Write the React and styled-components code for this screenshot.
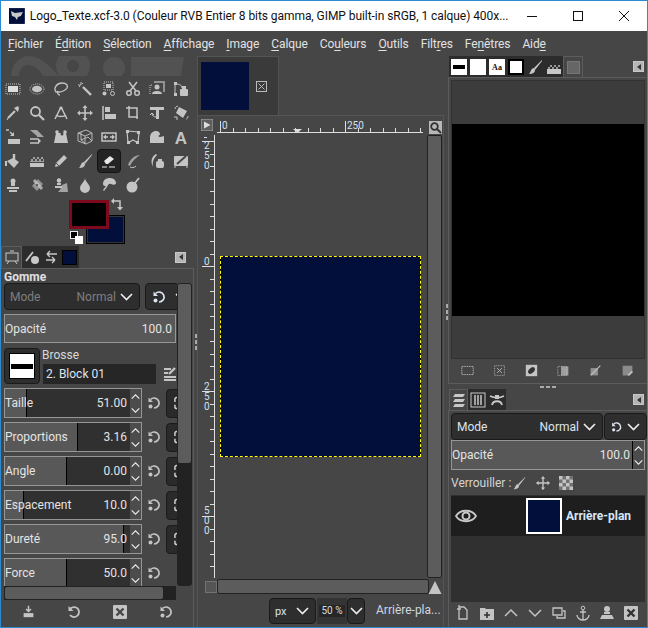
import React from "react";
import styled, { createGlobalStyle } from "styled-components";

const GlobalStyle = createGlobalStyle`
  html, body { margin: 0; padding: 0; background: #464646; }
  * { box-sizing: border-box; }
`;

const NAVY = "#010f3a";

const Window = styled.div`
  width: 648px;
  height: 628px;
  display: flex;
  flex-direction: column;
  overflow: hidden;
  background: #464646;
  border: 1px solid #2b8ad0;
  font-family: Roboto, "Open Sans", sans-serif;
  font-size: 12px;
  color: #dcdcdc;
`;

const TitleBar = styled.div`
  height: 30px;
  flex: none;
  display: flex;
  align-items: center;
  background: #fff;
  color: #111;
  padding-left: 8px;
  font-size: 12px;
`;

const TitleText = styled.div`
  margin-left: 5px;
  width: 484px;
  white-space: nowrap;
  overflow: hidden;
  letter-spacing: -0.06px;
`;

const WinControls = styled.div`
  margin-left: auto;
  display: flex;
`;

const WinButton = styled.div`
  width: 46px;
  height: 30px;
  display: flex;
  align-items: center;
  justify-content: center;
`;

const MenuBar = styled.div`
  height: 25px;
  flex: none;
  display: flex;
  align-items: center;
  gap: 12px;
  padding: 0 0 0 7px;
  background: #464646;
  font-size: 12px;
  letter-spacing: -0.1px;
  color: #e2e2e2;
`;

const MenuItem = styled.span`
  white-space: nowrap;
  u { text-underline-offset: 2px; }
`;

const Main = styled.div`
  flex: 1;
  min-height: 0;
  display: grid;
  grid-template-columns: 193px 3px 248px 3px 1fr;
`;

const Column = styled.div`
  display: flex;
  flex-direction: column;
  min-width: 0;
  min-height: 0;
`;

const Sash = styled.div`
  display: flex;
  flex-direction: column;
  align-items: center;
  justify-content: center;
  gap: 2px;
  padding-bottom: ${p => p.$low || 0}px;
  i { display: block; width: 2px; height: 4px; background: #aaa; }
`;

const Logo = styled.svg`
  display: block;
  margin: 0 0 1px 0;
  flex: none;
`;

const ToolGrid = styled.div`
  display: grid;
  grid-template-columns: repeat(8, 24px);
  grid-auto-rows: 24px;
  flex: none;
`;

const ToolCell = styled.div`
  display: flex;
  align-items: center;
  justify-content: center;
  border-radius: 4px;
  color: #c4c4c4;
  ${p => p.$active && `background: #242424; border: 1px solid #141414; color: #e8e8e8;`}
`;

const ColorArea = styled.div`
  position: relative;
  height: 49px;
  flex: none;
`;

const Swatch = styled.div`
  position: absolute;
`;

const FgSwatch = styled(Swatch)`
  left: 68px;
  top: 3px;
  width: 40px;
  height: 29px;
  background: #000;
  border: 3px solid #7d0a1c;
  z-index: 2;
`;

const BgSwatch = styled(Swatch)`
  left: 85px;
  top: 18px;
  width: 39px;
  height: 29px;
  background: ${NAVY};
  border: 1px solid #000;
  box-shadow: inset 0 0 0 1px #333;
`;

const DefaultBlack = styled(Swatch)`
  left: 69px;
  top: 34px;
  width: 8px;
  height: 8px;
  background: #000;
  border: 1px solid #eee;
`;

const DefaultWhite = styled(Swatch)`
  left: 74px;
  top: 39px;
  width: 8px;
  height: 8px;
  background: #fff;
`;

const SwapIcon = styled(Swatch)`
  left: 110px;
  top: 1px;
  color: #c8c8c8;
`;

const TabRow = styled.div`
  height: ${p => p.$h || 22}px;
  flex: none;
  display: flex;
  align-items: stretch;
  padding-left: ${p => p.$pad || 0}px;
`;

const Tab = styled.div`
  width: ${p => p.$w || 19}px;
  display: flex;
  align-items: center;
  justify-content: center;
  color: #c8c8c8;
  background: ${p => (p.$active ? "#464646" : "#2c2c2c")};
  ${p => p.$active && `border: 1px solid #5c5c5c; border-bottom: none;`}
`;

const DockMenu = styled.div`
  margin-left: auto;
  margin-right: ${p => p.$right || 8}px;
  align-self: center;
  width: 11px;
  height: 11px;
  background: #b5b5b5;
  border: 1px solid #c8c8c8;
  display: flex;
  align-items: center;
  justify-content: center;
  &::after {
    content: "";
    border: 3px solid transparent;
    border-right: 4px solid #333;
    border-left: none;
  }
`;

const OptionsFrame = styled.div`
  flex: 1;
  min-height: 0;
  border-top: 1px solid #5c5c5c;
  border-right: 1px solid #5c5c5c;
  padding: 1px 0 0 3px;
  display: flex;
  flex-direction: column;
`;

const OptionsTitle = styled.div`
  font-weight: 700;
  font-size: 12px;
  height: 13px;
  line-height: 14px;
  color: #e0e0e0;
`;

const OptionsBody = styled.div`
  display: flex;
  align-items: flex-start;
  height: 303px;
  flex: none;
`;

const OptionsScroll = styled.div`
  width: 173px;
  height: 303px;
  overflow: hidden;
  display: flex;
  flex-direction: column;
  gap: 4px;
  flex: none;
`;

const VScrollTrack = styled.div`
  width: 15px;
  height: ${p => p.$h}px;
  flex: none;
  background: #222;
  border: 1px solid #222;
  border-radius: 3px;
`;

const VScrollThumb = styled.div`
  height: ${p => p.$h}px;
  background: #5c5c5c;
  border-radius: 2px;
`;

const HScrollTrack = styled.div`
  width: ${p => p.$w}px;
  height: 14px;
  flex: none;
  background: #222;
  border: 1px solid #222;
`;

const HScrollThumb = styled.div`
  width: ${p => p.$w}px;
  height: 12px;
  background: #5c5c5c;
  border-radius: 2px;
`;

const ComboRow = styled.div`
  display: flex;
  gap: ${p => p.$gap ?? 5}px;
  height: 27px;
  flex: none;
`;

const Combo = styled.div`
  flex: ${p => (p.$w ? "none" : 1)};
  width: ${p => (p.$w ? p.$w + "px" : "auto")};
  display: flex;
  align-items: center;
  justify-content: space-between;
  gap: 4px;
  padding: 0 6px 0 5px;
  background: #2e2e2e;
  border: 1px solid #1a1a1a;
  border-radius: 4px;
  color: ${p => (p.$dim ? "#7e7e7e" : "#dce4f0")};
  white-space: nowrap;
  overflow: hidden;
`;

const ComboValue = styled.span`
  margin-left: auto;
`;

const Scale = styled.div`
  width: ${p => p.$w}px;
  height: ${p => p.$h || 30}px;
  flex: none;
  display: flex;
  align-items: center;
  padding-left: 0;
  border: 1px solid #969696;
  background: linear-gradient(
    to right,
    #585858 0 ${p => p.$fill}px,
    #000 ${p => p.$fill}px ${p => p.$fill + 1}px,
    #303030 ${p => p.$fill + 1}px
  );
  color: #e4e4e4;
  white-space: nowrap;
`;

const ScaleValue = styled.span`
  margin-left: auto;
  padding-right: 3px;
`;

const Arrows = styled.div`
  width: 11px;
  height: 100%;
  flex: none;
  display: flex;
  flex-direction: column;
  align-items: center;
  justify-content: space-around;
  background: #4c4c4c;
  color: #eee;
`;

const BrushRow = styled.div`
  display: flex;
  height: 36px;
  flex: none;
  gap: 1px;
  margin-top: 1px;
`;

const BrushPreview = styled.div`
  width: 36px;
  height: 36px;
  flex: none;
  border: 1px solid #1a1a1a;
  border-radius: 4px;
  background: #2e2e2e;
  display: flex;
  align-items: center;
  justify-content: center;
`;

const BrushThumb = styled.div`
  width: 26px;
  height: 26px;
  background: #fff;
  border: 1px solid #000;
  display: flex;
  align-items: center;
  justify-content: center;
  &::before {
    content: "";
    width: 22px;
    height: 5px;
    background: #000;
  }
`;

const BrushInfo = styled.div`
  flex: 1;
  display: flex;
  flex-direction: column;
  justify-content: space-between;
  padding-left: 1px;
`;

const BrushLabel = styled.div`
  line-height: 14px;
  color: #d8d8d8;
`;

const BrushLine = styled.div`
  display: flex;
  align-items: center;
`;

const BrushEntry = styled.div`
  width: 113px;
  height: 20px;
  flex: none;
  margin-left: 1px;
  background: #262626;
  padding: 0 3px;
  line-height: 20px;
  color: #dce4f0;
`;

const SpinRow = styled.div`
  display: flex;
  align-items: center;
  height: 30px;
  flex: none;
`;

const RowIcon = styled.div`
  width: ${p => p.$w || 24}px;
  display: flex;
  justify-content: center;
  color: #c4c4c4;
  flex: none;
`;

const Toggle = styled.div`
  width: 22px;
  height: 29px;
  flex: none;
  background: #2a2a2a;
  border: 1px solid #1a1a1a;
  border-radius: 4px;
  color: #cfcfcf;
  display: flex;
  align-items: center;
  padding-left: 7px;
  margin-left: 1px;
`;

const IconBar = styled.div`
  height: ${p => p.$h}px;
  flex: none;
  display: flex;
  align-items: center;
  padding-left: ${p => p.$pad || 0}px;
  color: #c4c4c4;
`;

const BarCell = styled.div`
  width: ${p => p.$w}px;
  flex: none;
  display: flex;
  justify-content: center;
`;

const ThumbTab = styled.div`
  width: 82px;
  height: 59px;
  flex: none;
  display: flex;
  align-items: center;
  padding-left: 3px;
  background: #3a3a3a;
  border: 1px solid #545454;
  border-bottom: none;
  color: #c0c0c0;
`;

const ThumbImage = styled.div`
  width: 48px;
  height: 48px;
  flex: none;
  background: ${NAVY};
`;

const CloseBox = styled.div`
  margin-left: 7px;
  display: flex;
`;

const ImageFrame = styled.div`
  flex: 1;
  min-height: 0;
  margin-right: 1px;
  border: 1px solid #545454;
  border-bottom: none;
  padding: 3px 3px 0 3px;
  display: grid;
  grid-template-columns: 16px 209px 16px;
  grid-template-rows: 16px 443px 17px 1fr;
`;

const RulerCorner = styled.div`
  color: #c0c0c0;
  display: flex;
`;

const Ruler = styled.svg`
  display: block;
  font-family: Roboto, sans-serif;
  font-size: 10px;
`;

const Canvas = styled.div`
  display: flex;
  align-items: center;
  justify-content: center;
  padding-right: 3px;
  background: #464646;
`;

const Layer = styled.div`
  width: 201px;
  height: 201px;
  flex: none;
  background: #000;
  border: 1px dashed #ffff00;
`;

const LayerFill = styled.div`
  width: 100%;
  height: 100%;
  background: ${NAVY};
`;

const CanvasVScroll = styled.div`
  width: 15px;
  height: 443px;
  background: #5c5c5c;
  border: 1px solid #222;
  border-radius: 2px;
  margin-left: 1px;
`;

const CanvasHScroll = styled.div`
  height: 15px;
  background: #5c5c5c;
  border: 1px solid #222;
  border-radius: 2px;
  margin: 1px 0 0 0;
  width: 212px;
`;

const NavBox = styled.div`
  color: #c4c4c4;
  display: flex;
  align-items: center;
  justify-content: flex-end;
`;

const StatusBar = styled.div`
  grid-column: 1 / 4;
  display: flex;
  align-items: flex-start;
  padding: 3px 0 0 68px;
`;

const UnitCombo = styled(Combo)`
  width: 47px;
  height: 26px;
  flex: none;
  font-size: 11px;
`;

const ZoomBox = styled.div`
  width: 30px;
  height: 26px;
  margin-left: 1px;
  background: #343434;
  display: flex;
  align-items: center;
  justify-content: center;
  flex: none;
`;

const ZoomEntry = styled.div`
  width: 26px;
  height: 12px;
  background: #262626;
  font-size: 10px;
  line-height: 12px;
  text-align: center;
  white-space: nowrap;
`;

const ArrowButton = styled(Combo)`
  width: 18px;
  height: 26px;
  flex: none;
  padding: 0;
  justify-content: center;
`;

const StatusText = styled.div`
  margin-left: 11px;
  white-space: nowrap;
  line-height: 25px;
  color: #cfd6e0;
`;

const DockFrame = styled.div`
  height: 307px;
  flex: none;
  border-top: 1px solid #5c5c5c;
  border-bottom: 1px solid #5c5c5c;
  border-left: 1px solid #5c5c5c;
  padding: 2px 0 0 2px;
  display: flex;
  flex-direction: column;
`;

const PreviewBox = styled.div`
  width: 194px;
  height: 279px;
  flex: none;
  display: flex;
  align-items: center;
  background: #3c3c3c;
  border: 1px solid #323232;
`;

const PreviewBlack = styled.div`
  width: 100%;
  height: 192px;
  background: #000;
`;

const SashRow = styled.div`
  height: 5px;
  flex: none;
  display: flex;
  align-items: center;
  justify-content: center;
  gap: 2px;
  i { display: block; width: 4px; height: 2px; background: #aaa; }
`;

const LayersFrame = styled.div`
  flex: 1;
  min-height: 0;
  border-top: 1px solid #5c5c5c;
  border-left: 1px solid #5c5c5c;
  padding: 2px 0 0 2px;
  display: flex;
  flex-direction: column;
`;

const LockRow = styled.div`
  height: 25px;
  flex: none;
  display: flex;
  align-items: center;
  color: #c4c4c4;
  white-space: nowrap;
`;

const LockLabel = styled.span`
  width: 56px;
  color: #d4d4d4;
`;

const LayerList = styled.div`
  width: 194px;
  height: 107px;
  flex: none;
  background: #303030;
  padding-top: 1px;
`;

const LayerRow = styled.div`
  height: 40px;
  display: flex;
  align-items: center;
  background: #1e1e1e;
`;

const LayerEye = styled.div`
  width: 75px;
  flex: none;
  padding-left: 4px;
  color: #c8c8c8;
  display: flex;
`;

const LayerThumb = styled.div`
  width: 36px;
  height: 36px;
  flex: none;
  background: ${NAVY};
  border: 2px solid #fff;
`;

const LayerName = styled.div`
  margin-left: 4px;
  font-weight: 700;
  color: #d6e6fa;
  white-space: nowrap;
`;

const S = { fill: "none", stroke: "currentColor" };

// hand drawn 16px icons, roughly the GIMP symbolic set
const Ico = ({ size = 16, children }) => (
  <svg width={size} height={size} viewBox="0 0 16 16" fill="currentColor">{children}</svg>
);

const Chevron = ({ w = 13, h = 8, sw = 1.6, up, color = "#eee" }) => (
  <svg width={w} height={h} viewBox="0 0 13 8" style={{ flex: "none" }}>
    <path d={up ? "M1 7 6.5 1.5 12 7" : "M1 1 6.5 6.5 12 1"} fill="none" stroke={color} strokeWidth={sw} />
  </svg>
);

const ResetIcon = () => (
  <Ico>
    <path d="M4.5 4.5A5 5 0 1 1 8 13" {...S} strokeWidth="1.7" />
    <path d="M2.5 2.5v4.5h4.5z" />
    <circle cx="4.5" cy="11.5" r="2" />
  </Ico>
);

const BrushGlyph = () => (
  <>
    <path d="M15 1 7 9l1 2 7-9z" />
    <path d="M7 9c-3 0-3 4-5 6 3 0 6-1 6-4z" />
  </>
);

const MoveGlyph = () => (
  <>
    <path d="M8 1v14M1 8h14" {...S} strokeWidth="1.6" />
    <path d="M8 0 5.5 3h5zM8 16l-2.5-3h5zM0 8l3-2.5v5zM16 8l-3-2.5v5z" />
  </>
);

const tools = [
  <Ico key="rect"><rect x="1" y="3" width="14" height="10" {...S} strokeDasharray="1 1" /><rect x="3" y="5" width="10" height="6" fill="#ddd" /></Ico>,
  <Ico key="ell"><ellipse cx="8" cy="8" rx="7" ry="5" {...S} strokeDasharray="1 1" /><ellipse cx="8" cy="8" rx="5" ry="3.2" /></Ico>,
  <Ico key="lasso"><path d="M3 11C0 7 4 2 9 2s6 3 5 5-5 4-8 4c-1 0-3 0-3 0zM5 10c-1 2 0 4 2 4" {...S} strokeWidth="1.3" /></Ico>,
  <Ico key="wand"><path d="M6 6 14 14" {...S} strokeWidth="2.4" /><path d="M4 1v3M1 4h3M6 2 5 3M2 6l1-1" {...S} /></Ico>,
  <Ico key="colsel"><rect x="3" y="1" width="9" height="8" {...S} strokeDasharray="1 1" /><rect x="5" y="3" width="5" height="4" /><circle cx="3.5" cy="12.5" r="2" /><circle cx="11.5" cy="12.5" r="2" {...S} /></Ico>,
  <Ico key="sciss"><path d="M5 10 12 1M11 10 4 1" {...S} strokeWidth="1.5" /><circle cx="4" cy="12" r="2.3" {...S} strokeWidth="1.5" /><circle cx="12" cy="12" r="2.3" {...S} strokeWidth="1.5" /></Ico>,
  <Ico key="fgsel"><path d="M1 13V4h2" {...S} strokeDasharray="1 1" /><path d="M5 1h10v10" {...S} opacity=".6" strokeWidth="2" /><circle cx="8" cy="6" r="2.5" /><path d="M3 13c0-2 2-3 5-3s5 1 5 3z" /></Ico>,
  <Ico key="path"><path d="M2 14V3h1M3 3c3 0 6 1 6 4" {...S} /><rect x="1" y="1" width="3" height="3" /><rect x="1" y="12" width="3" height="3" /><rect x="7" y="8" width="8" height="7" rx="1" /><rect x="9" y="5" width="4" height="3" /></Ico>,
  <Ico key="drop"><path d="M3 13 10 6" {...S} strokeWidth="2.2" /><path d="M2 15 3 13" {...S} /><path d="M9 3l4 4 1-4-1-2z" /></Ico>,
  <Ico key="zoom"><circle cx="6.5" cy="6.5" r="4.5" {...S} strokeWidth="1.8" /><path d="M10 10l5 5" {...S} strokeWidth="2.2" /></Ico>,
  <Ico key="measure"><path d="M8 2 2 14M8 2l6 12M3 10c2 2 8 2 10 0" {...S} strokeWidth="1.5" /><circle cx="8" cy="3" r="1.6" /></Ico>,
  <Ico key="move"><MoveGlyph /></Ico>,
  <Ico key="align"><path d="M2 1v14" {...S} strokeWidth="1.5" /><rect x="4" y="2" width="5" height="5" /><rect x="4" y="9" width="11" height="5" /></Ico>,
  <Ico key="crop"><path d="M1 3h11v11M4 1v11h9" {...S} strokeWidth="1.5" /></Ico>,
  <Ico key="unified"><path d="M1 2h14v3h-5v9H7V5H1z" /><path d="M3 8c0 3 2 4 4 4M3 8l-2 2M3 8l2 2" {...S} /></Ico>,
  <Ico key="handle"><path d="M6 2 14 6 10 13 3 8z" /><path d="M2 4c0-2 2-3 3-3M13 14c1 0 2-1 2-3" {...S} /><path d="M1 12h3v3" {...S} /></Ico>,
  <Ico key="scale"><path d="M1 1h3M5 3l3 3" {...S} strokeWidth="1.4" /><path d="M9 7V3L5 7z" /><rect x="3" y="10" width="12" height="5" /></Ico>,
  <Ico key="shear"><path d="M1 1h7l7 7H8v-1z" opacity=".75" /><path d="M1 10h8M1 14h9" {...S} strokeWidth="1.4" /><path d="M12 12l-3-3v6z" /></Ico>,
  <Ico key="persp"><path d="M3 4h10l2 10H1z" /><circle cx="4" cy="3" r="1.8" /><circle cx="12" cy="3" r="1.8" /><circle cx="9" cy="5" r="1.5" fill="#464646" /></Ico>,
  <Ico key="cube"><path d="M1 4 9 1l6 3v8l-6 3-8-3zM1 4l7 3 7-3M8 7v8M4 3v8l4 3M4 11l7-3 4 4" {...S} strokeWidth=".9" /></Ico>,
  <Ico key="flip"><rect x="1" y="4" width="14" height="8" fill="none" stroke="currentColor" strokeWidth="1.5" /><path d="M2 8l3-2.5v5zM14 8l-3-2.5v5zM8 3v10" /><path d="M5 8h2M9 8h2" {...S} strokeWidth="1.5" /></Ico>,
  <Ico key="cage"><path d="M2 2 14 3 13 14 8 11 3 14z" {...S} strokeWidth="1.2" /><rect x="1" y="1" width="3" height="3" /><rect x="12" y="2" width="3" height="3" /><rect x="11" y="12" width="3" height="3" /><rect x="2" y="12" width="3" height="3" /></Ico>,
  <Ico key="warp"><path d="M1 14V9c0-5 3-7 6-7s4 2 4 4c-2 0-2 2 0 2 2 0 3-1 4-1v7z" /></Ico>,
  <Ico key="text"><text x="8" y="14.5" textAnchor="middle" fontFamily="Liberation Sans, sans-serif" fontWeight="700" fontSize="17">A</text></Ico>,
  <Ico key="bucket"><path d="M2 8 8 5l6 4-5 6z" /><path d="M9 1v6" {...S} strokeWidth="2.4" /><path d="M1 8v5" {...S} strokeWidth="2" /></Ico>,
  <Ico key="grad"><rect x="1" y="10" width="14" height="4" /><path d="M1 9h14v-1H1zM2 6h2v2H2zM6 6h2v2H6zM10 6h2v2h-2zM14 6h1v2h-1zM4 4h2v2H4zM8 4h2v2H8zM12 4h2v2h-2z" opacity=".7" /></Ico>,
  <Ico key="pencil"><path d="M2 14l1-4 8-8 3 3-8 8z" /><path d="M3 10l3 3" stroke="#464646" /></Ico>,
  <Ico key="brush"><BrushGlyph /></Ico>,
  <Ico key="eraser"><path d="M3 8 9 3l4 3-6 5H5z" /><path d="M1 14h5M8 14h6" {...S} /></Ico>,
  <Ico key="air"><path d="M15 2C10 2 5 6 3 12l2 1c2-5 6-8 10-11z" opacity=".7" /><path d="M5 14c2 1 4 1 6-1" {...S} /></Ico>,
  <Ico key="ink"><path d="M7 1C3 3 1 8 4 14c-1-5 1-9 4-12z" /><rect x="7" y="8" width="8" height="7" rx="2" /><rect x="9" y="6" width="4" height="3" /></Ico>,
  <Ico key="mypaint"><rect x="1" y="3" width="14" height="10" rx="1" /><path d="M4 11 13 3" stroke="#464646" strokeWidth="2" /><path d="M2 13v2M14 13v2" {...S} /></Ico>,
  <Ico key="clone"><circle cx="8" cy="4" r="2.5" /><path d="M6 6h4v3H6z" /><path d="M2 10h12v2H2zM4 13h8v2H4z" /></Ico>,
  <Ico key="heal"><path d="M3 9 9 2l5 5-6 7z" opacity=".6" /><path d="M5 3 13 12" {...S} strokeWidth="3" opacity=".8" /><circle cx="8" cy="8" r="1" fill="#464646" /></Ico>,
  <Ico key="pclone"><circle cx="6" cy="3.5" r="2.2" /><path d="M4 6h4v2H4zM2 9h7v2H2z" /><path d="M9 8l5-2 1 9H5l2-2z" opacity=".75" /></Ico>,
  <Ico key="blur"><path d="M8 1C8 4 3 8 3 11a5 5 0 0 0 10 0C13 8 8 4 8 1z" /></Ico>,
  <Ico key="smudge"><path d="M2 7c0-4 3-6 7-6s6 3 6 5-3 2-5 1-3 1-4 3l-3 4-1-1 3-4C4 9 2 9 2 7z" /></Ico>,
  <Ico key="dodge"><circle cx="7" cy="10" r="5.5" /><path d="M10 6l4-5" {...S} strokeWidth="1.8" /></Ico>,
];

const menus = [
  ["", "F", "ichier"], ["É", "d", "ition"], ["", "S", "élection"], ["", "A", "ffichage"],
  ["", "I", "mage"], ["", "C", "alque"], ["Co", "u", "leurs"], ["", "O", "utils"],
  ["Filt", "r", "es"], ["Fe", "n", "êtres"], ["Aid", "e", ""],
];

const scales = [
  ["Taille", "51.00", 21],
  ["Proportions", "3.16", 72],
  ["Angle", "0.00", 61],
  ["Espacement", "10.0", 18],
  ["Dureté", "95.0", 118],
  ["Force", "50.0", 61],
];

const ScaleRow = ({ label, value, fill, last }) => (
  <SpinRow>
    <Scale $w={138} $fill={fill}>
      {label}
      <ScaleValue>{value}</ScaleValue>
      <Arrows>
        <Chevron w={9} h={7} up />
        <Chevron w={9} h={7} />
      </Arrows>
    </Scale>
    <RowIcon $w={23}><ResetIcon /></RowIcon>
    {!last && (
      <Toggle>
        <svg width="14" height="14" viewBox="0 0 14 14">
          <path d="M1 6V3a2 2 0 0 1 4 0v3M1 9v2a2 2 0 0 0 4 0V9" fill="none" stroke="currentColor" strokeWidth="1.6" />
        </svg>
      </Toggle>
    )}
  </SpinRow>
);

const hTicks = Array.from({ length: 17 }, (_, i) => 3 + i * 12.5);
const vTicks = Array.from({ length: 36 }, (_, i) => 6 + i * 12.5);

const TopRuler = () => (
  <Ruler width="209" height="16">
    <path d="M0 13.5H206" stroke="#ddd" />
    {hTicks.map(x => (
      <path key={x} d={`M${Math.round(x) + 0.5} ${x === 3 || x === 128 ? 2 : 9}V13`} stroke="#ddd" />
    ))}
    <path d="M76 10h9l-4.5 4z" fill="#ddd" />
    <text x="5" y="10" fill="#cfe0f5">0</text>
    <text x="130" y="10" fill="#cfe0f5">250</text>
  </Ruler>
);

const LeftRuler = () => (
  <Ruler width="16" height="443">
    <path d="M13.5 0V443" stroke="#ddd" />
    {vTicks.map(y => (
      <path key={y} d={`M${(y - 6) % 125 === 0 ? 1 : 9} ${Math.round(y) + 0.5}H13`} stroke="#ddd" />
    ))}
    <path d="M3 2.5h3" stroke="#cfe0f5" />
    {[
      ["2", 14], ["5", 24], ["0", 34],
      ["0", 130],
      ["2", 255], ["5", 265], ["0", 275],
      ["5", 379], ["0", 389], ["0", 399],
    ].map(([d, y], i) => (
      <text key={i} x="3" y={y} fill="#cfe0f5">{d}</text>
    ))}
  </Ruler>
);

const dialogIcons = [
  <Ico key="a" size={13}><rect x="1" y="3" width="14" height="10" {...S} strokeDasharray="2 1" /></Ico>,
  <Ico key="b" size={13}><rect x="2" y="2" width="12" height="12" {...S} strokeDasharray="1 1" /><path d="M5 5l6 6M11 5l-6 6" {...S} /></Ico>,
  <Ico key="c" size={13}><rect x="1" y="1" width="14" height="14" /><ellipse cx="8" cy="8" rx="5" ry="3" transform="rotate(-45 8 8)" fill="#333" /></Ico>,
  <Ico key="d" size={13}><rect x="1" y="3" width="11" height="11" {...S} strokeDasharray="1 1" /><path d="M5 3h9v11H5zM8 4v9M11 4v9" opacity=".7" /></Ico>,
  <Ico key="e" size={13}><path d="M2 5h9v9H2z" opacity=".6" /><path d="M2 14 14 2" {...S} strokeWidth="1.4" /></Ico>,
  <Ico key="f" size={13}><path d="M2 2h12v8l-4 4H2z" opacity=".55" /><path d="M9 14l5-5" {...S} strokeWidth="2" /></Ico>,
];

const layerIcons = [
  <Ico key="a"><path d="M4 2h5l3 3v9H4zM2 4h4M4 2V0" {...S} strokeWidth="1.3" /></Ico>,
  <Ico key="b"><path d="M1 3h5l1 1h8v11H1z" /><path d="M8 7v6M5 10h6" stroke="#333" strokeWidth="1.6" /></Ico>,
  <Ico key="c"><path d="M2 11 8 5l6 6" {...S} strokeWidth="1.5" /></Ico>,
  <Ico key="d"><path d="M2 5l6 6 6-6" {...S} strokeWidth="1.5" /></Ico>,
  <Ico key="e"><path d="M2 3h9v7H2z" {...S} strokeWidth="1.3" /><path d="M12 6h2v7H6v-2" {...S} strokeWidth="1.3" /></Ico>,
  <Ico key="f"><circle cx="8" cy="3" r="1.8" {...S} /><path d="M8 5v10M5 7h6M2 10c0 3 3 5 6 5s6-2 6-5" {...S} strokeWidth="1.3" /></Ico>,
  <Ico key="g"><circle cx="8" cy="4" r="3" /><path d="M5 7h6v2H5zM1 14l2-4h10l2 4z" /></Ico>,
  <Ico key="h"><rect x="1" y="1" width="14" height="14" rx="1" /><path d="M4.5 4.5l7 7M11.5 4.5l-7 7" stroke="#333" strokeWidth="2.4" /></Ico>,
];

export default function App() {
  return (
    <Window>
      <GlobalStyle />
      <TitleBar>
        <svg width="16" height="16" viewBox="0 0 16 16">
          <rect width="16" height="16" fill={NAVY} />
          <path d="M2 3 6 5l8-1-2 4-3 1-1 3-2-3-3-1z" fill="#c8c8c8" />
        </svg>
        <TitleText>Logo_Texte.xcf-3.0 (Couleur RVB Entier 8 bits gamma, GIMP built-in sRGB, 1 calque) 400x...</TitleText>
        <WinControls>
          <WinButton>
            <svg width="10" height="10"><path d="M0 5.5H10" stroke="#111" /></svg>
          </WinButton>
          <WinButton>
            <svg width="10" height="10"><rect x=".5" y=".5" width="9" height="9" fill="none" stroke="#111" /></svg>
          </WinButton>
          <WinButton>
            <svg width="10" height="10"><path d="M0 0 10 10M10 0 0 10" stroke="#111" /></svg>
          </WinButton>
        </WinControls>
      </TitleBar>
      <MenuBar>
        {menus.map(([a, u, b]) => (
          <MenuItem key={a + u + b}>{a}<u>{u}</u>{b}</MenuItem>
        ))}
      </MenuBar>
      <Main>
        <Column>
          <Logo width="192" height="20" viewBox="0 0 192 20">
            <path d="M10 20C11 6 20 0 28 0c12 0 20 10 30 20H42C38 13 33 9 27 9c-6 0-9 5-9 11z" fill="#525252" />
            <circle cx="72" cy="10" r="17" fill="#525252" />
            <circle cx="72" cy="10" r="6" fill="#464646" />
            <circle cx="113" cy="12" r="11" fill="#525252" />
            <path d="M130 1h53l-3 19h-50z" fill="#525252" />
          </Logo>
          <ToolGrid>
            {tools.map((t, i) => (
              <ToolCell key={i} $active={i === 28}>{t}</ToolCell>
            ))}
          </ToolGrid>
          <ColorArea>
            <FgSwatch />
            <BgSwatch />
            <DefaultBlack />
            <DefaultWhite />
            <SwapIcon>
              <svg width="13" height="13" viewBox="0 0 13 13">
                <path d="M1 3h8v6" fill="none" stroke="currentColor" strokeWidth="1.5" />
                <path d="M3 0v6L0 3zM6 9h6l-3 3.5z" fill="currentColor" />
              </svg>
            </SwapIcon>
          </ColorArea>
          <TabRow>
            <Tab $active $w={21}>
              <Ico><rect x="2" y="3" width="12" height="8" {...S} /><path d="M6 1h4M3 14l2-3M13 14l-2-3" {...S} /></Ico>
            </Tab>
            <Tab>
              <Ico><path d="M2 12 9 3" {...S} strokeWidth="1.8" /><circle cx="11" cy="11" r="4" /></Ico>
            </Tab>
            <Tab>
              <Ico><path d="M14 5H4M4 5l3-3M4 5l3 3M3 11h9M12 11l-3-3M12 11l-3 3" {...S} strokeWidth="1.4" /></Ico>
            </Tab>
            <Tab>
              <svg width="15" height="15"><rect x=".5" y=".5" width="14" height="14" fill={NAVY} stroke="#000" /></svg>
            </Tab>
            <DockMenu />
          </TabRow>
          <OptionsFrame>
            <OptionsTitle>Gomme</OptionsTitle>
            <OptionsBody>
              <OptionsScroll>
                <ComboRow>
                  <Combo $dim $w={136}>
                    Mode<ComboValue>Normal</ComboValue>
                    <Chevron />
                  </Combo>
                  <Combo $w={50}>
                    <ResetIcon />
                    <Chevron />
                  </Combo>
                </ComboRow>
                <Scale $w={172} $h={29} $fill={170}>
                  Opacité<ScaleValue>100.0</ScaleValue>
                </Scale>
                <BrushRow>
                  <BrushPreview><BrushThumb /></BrushPreview>
                  <BrushInfo>
                    <BrushLabel>Brosse</BrushLabel>
                    <BrushLine>
                      <BrushEntry>2. Block 01</BrushEntry>
                      <RowIcon $w={28}>
                        <Ico><path d="M2 3h7M2 7h4M2 11h12M2 14h12" {...S} strokeWidth="2" /><path d="M7 8l6-6" {...S} strokeWidth="2.4" /></Ico>
                      </RowIcon>
                    </BrushLine>
                  </BrushInfo>
                </BrushRow>
                {scales.map(([l, v, f], i) => (
                  <ScaleRow key={l} label={l} value={v} fill={f} last={i === 5} />
                ))}
              </OptionsScroll>
              <VScrollTrack $h={303}><VScrollThumb $h={179} /></VScrollTrack>
            </OptionsBody>
            <HScrollTrack $w={172}><HScrollThumb $w={158} /></HScrollTrack>
            <IconBar $h={23} $pad={1}>
              {[
                <Ico key="a" size={13}><path d="M8 1v7M5 5l3 3 3-3" {...S} strokeWidth="1.8" /><path d="M2 10h12v5H2z" /></Ico>,
                <Ico key="b"><path d="M4.5 4.5A5 5 0 1 1 4 11" {...S} strokeWidth="1.8" /><path d="M2.5 2v5h5z" /></Ico>,
                <Ico key="c"><rect x="1" y="1" width="14" height="14" rx="1" /><path d="M4.5 4.5l7 7M11.5 4.5l-7 7" stroke="#464646" strokeWidth="2.4" /></Ico>,
                <ResetIcon key="d" />,
              ].map((ic, i) => (
                <BarCell key={i} $w={46}>{ic}</BarCell>
              ))}
            </IconBar>
          </OptionsFrame>
        </Column>

        <Sash><i /><i /><i /></Sash>

        <Column>
          <ThumbTab>
            <ThumbImage />
            <CloseBox>
              <svg width="11" height="11" viewBox="0 0 11 11">
                <rect x=".5" y=".5" width="10" height="10" fill="none" stroke="#bbb" />
                <path d="M2.5 2.5l6 6M8.5 2.5l-6 6" stroke="#bbb" />
              </svg>
            </CloseBox>
          </ThumbTab>
          <ImageFrame>
            <RulerCorner>
              <svg width="12" height="12">
                <rect width="12" height="12" fill="#5e5e5e" stroke="#aaa" />
                <path d="M3 2.5v7L9.5 6z" fill="#ddd" />
              </svg>
            </RulerCorner>
            <TopRuler />
            <NavBox>
              <svg width="13" height="13" viewBox="0 0 13 13">
                <rect width="13" height="13" fill="#b8b8b8" />
                <circle cx="5.5" cy="5.5" r="3.3" fill="none" stroke="#333" strokeWidth="1.8" />
                <path d="M8 8l4 4" stroke="#333" strokeWidth="2" />
              </svg>
            </NavBox>
            <LeftRuler />
            <Canvas>
              <Layer><LayerFill /></Layer>
            </Canvas>
            <CanvasVScroll />
            <NavBox>
              <svg width="12" height="12">
                <rect x=".5" y=".5" width="11" height="11" fill="#555" stroke="#999" strokeDasharray="1 1" />
              </svg>
            </NavBox>
            <CanvasHScroll />
            <NavBox>
              <svg width="14" height="14"><path d="M7 1 13.5 14H.5z" fill="#c4c4c4" /></svg>
            </NavBox>
            <StatusBar>
              <UnitCombo>px<Chevron /></UnitCombo>
              <ZoomBox><ZoomEntry>50 %</ZoomEntry></ZoomBox>
              <ArrowButton><Chevron /></ArrowButton>
              <StatusText>Arrière-pla...</StatusText>
            </StatusBar>
          </ImageFrame>
        </Column>

        <Sash $low={60}><i /><i /><i /></Sash>

        <Column>
          <TabRow $h={21} $pad={1}>
            <Tab><svg width="16" height="16"><rect width="16" height="16" fill="#fff" /><rect x="2" y="6" width="12" height="4" fill="#000" /></svg></Tab>
            <Tab><svg width="16" height="16"><rect width="16" height="16" fill="#fff" /></svg></Tab>
            <Tab>
              <svg width="16" height="16">
                <rect width="16" height="16" fill="#fff" />
                <text x="8" y="11" textAnchor="middle" fontSize="8" fontWeight="700" fontFamily="Liberation Serif, serif" fill="#111">Aa</text>
              </svg>
            </Tab>
            <Tab><svg width="16" height="16"><rect width="16" height="16" fill="#000" /><rect x="2" y="2" width="12" height="12" fill="#fff" /></svg></Tab>
            <Tab><Ico><BrushGlyph /></Ico></Tab>
            <Tab><Ico><rect x="1" y="10" width="14" height="5" /><path d="M2 8h2v2H2zM6 8h2v2H6zM10 8h2v2h-2zM4 6h2v2H4zM8 6h2v2H8zM12 6h2v2h-2z" opacity=".7" /></Ico></Tab>
            <Tab $active $w={20}>
              <svg width="13" height="13"><rect x=".5" y=".5" width="12" height="12" fill="#666" stroke="#999" strokeDasharray="1 1" /></svg>
            </Tab>
            <DockMenu $right={3} />
          </TabRow>
          <DockFrame>
            <PreviewBox><PreviewBlack /></PreviewBox>
            <IconBar $h={23}>
              {dialogIcons.map((ic, i) => (
                <BarCell key={i} $w={32}>{ic}</BarCell>
              ))}
            </IconBar>
          </DockFrame>
          <SashRow><i /><i /><i /></SashRow>
          <TabRow $h={21} $pad={1}>
            <Tab $active>
              <Ico><path d="M4 2h10l-2 3H2zM4 7h10l-2 3H2zM4 12h10l-2 3H2z" /></Ico>
            </Tab>
            <Tab>
              <Ico><rect x="1" y="1" width="14" height="14" {...S} /><path d="M5 3v10M8 3v10M11 3v10" {...S} strokeWidth="1.5" /></Ico>
            </Tab>
            <Tab>
              <Ico><path d="M1 4c4 2 10 2 14 0M3 13c1-5 9-5 10 0" {...S} strokeWidth="1.8" /><rect x="6" y="3" width="4" height="4" /></Ico>
            </Tab>
            <DockMenu $right={3} />
          </TabRow>
          <LayersFrame>
            <ComboRow $gap={1}>
              <Combo>
                Mode<ComboValue>Normal</ComboValue>
                <Chevron />
              </Combo>
              <Combo $w={43}>
                <ResetIcon />
                <Chevron />
              </Combo>
            </ComboRow>
            <Scale $w={194} $h={30} $fill={180}>
              Opacité<ScaleValue>100.0</ScaleValue>
              <Arrows>
                <Chevron w={9} h={7} up />
                <Chevron w={9} h={7} />
              </Arrows>
            </Scale>
            <LockRow>
              <LockLabel>Verrouiller :</LockLabel>
              <BarCell $w={24}><Ico size={14}><BrushGlyph /></Ico></BarCell>
              <BarCell $w={23}><Ico size={14}><MoveGlyph /></Ico></BarCell>
              <BarCell $w={24}><Ico size={14}><path d="M0 0h4v4H0zM8 0h4v4H8zM4 4h4v4H4zM12 4h4v4h-4zM0 8h4v4H0zM8 8h4v4H8zM4 12h4v4H4zM12 12h4v4h-4z" /><rect width="16" height="16" opacity=".35" /></Ico></BarCell>
            </LockRow>
            <LayerList>
              <LayerRow>
                <LayerEye>
                  <svg width="22" height="16" viewBox="0 0 22 16">
                    <path d="M1 8c4-7 16-7 20 0-4 7-16 7-20 0z" fill="none" stroke="currentColor" strokeWidth="1.8" />
                    <circle cx="11" cy="8" r="3.5" fill="none" stroke="currentColor" strokeWidth="2" />
                  </svg>
                </LayerEye>
                <LayerThumb />
                <LayerName>Arrière-plan</LayerName>
              </LayerRow>
            </LayerList>
            <IconBar $h={21}>
              {layerIcons.map((ic, i) => (
                <BarCell key={i} $w={24}>{ic}</BarCell>
              ))}
            </IconBar>
          </LayersFrame>
        </Column>
      </Main>
    </Window>
  );
}
